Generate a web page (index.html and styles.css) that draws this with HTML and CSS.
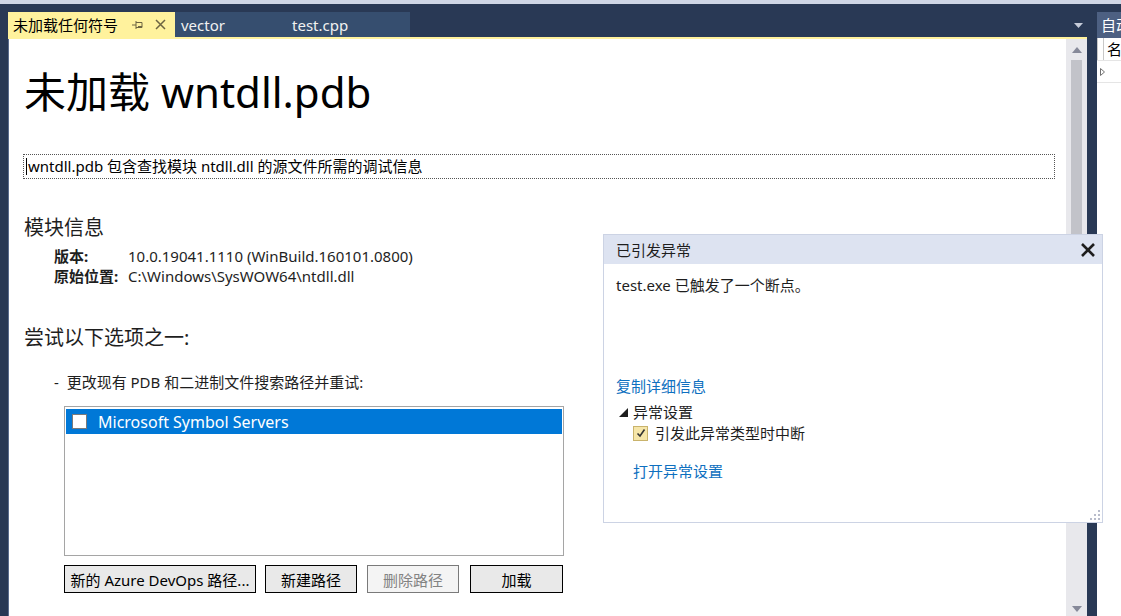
FILE: index.html
```html
<!DOCTYPE html>
<html lang="zh">
<head>
<meta charset="utf-8">
<link rel="stylesheet" href="styles.css">
</head>
<body>
<div class="topstrip"></div>
<div class="main">
  <div class="editor">
    <div class="tabrow">
      <div class="tab active">
        <span class="tabtitle">未加载任何符号</span>
        <svg class="pin" width="12" height="10" viewBox="0 0 12 10"><path d="M0 5H4M4 1V9M4 2.5H10V7.5H4M6 6.5H10" fill="none" stroke="#6d6542" stroke-width="1"/></svg>
        <svg class="tabx" width="11" height="11" viewBox="0 0 11 11"><path d="M1 1L10 10M10 1L1 10" stroke="#6d6542" stroke-width="1.5"/></svg>
      </div>
      <div class="tab inactive t-vector">vector</div>
      <div class="tab inactive t-test">test.cpp</div>
      <div class="tabspacer"></div>
      <svg class="dropdown" width="9" height="5" viewBox="0 0 9 5"><path d="M0 0H9L4.5 5Z" fill="#c6ccd9"/></svg>
    </div>
    <div class="yellowline"></div>
    <div class="docrow">
      <div class="doc">
        <h1 class="title">未加载 wntdll.pdb</h1>
        <div class="infobox"><span class="caret"></span>wntdll.pdb 包含查找模块 ntdll.dll 的源文件所需的调试信息</div>
        <h2 class="section s-module">模块信息</h2>
        <div class="kv">
          <div class="k">版本:</div><div class="v">10.0.19041.1110 (WinBuild.160101.0800)</div>
          <div class="k">原始位置:</div><div class="v">C:\Windows\SysWOW64\ntdll.dll</div>
        </div>
        <h2 class="section s-try">尝试以下选项之一:</h2>
        <div class="option">-&nbsp; 更改现有 PDB 和二进制文件搜索路径并重试:</div>
        <div class="listbox">
          <div class="listitem selected"><span class="cb"></span><span>Microsoft Symbol Servers</span></div>
        </div>
        <div class="buttons">
          <div class="btn b1">新的 Azure DevOps 路径...</div>
          <div class="btn b2">新建路径</div>
          <div class="btn b3 disabled">删除路径</div>
          <div class="btn b4">加载</div>
        </div>
      </div>
      <div class="vscroll">
        <svg class="arrow" width="10" height="6" viewBox="0 0 10 6"><path d="M0 6H10L5 0Z" fill="#868999"/></svg>
        <div class="thumb"></div>
        <div class="trackfill"></div>
        <svg class="arrow" width="10" height="6" viewBox="0 0 10 6"><path d="M0 0H10L5 6Z" fill="#868999"/></svg>
      </div>
    </div>
  </div>
  <div class="sidepanel">
    <div class="sidetab">自动</div>
    <div class="sidebody">
      <div class="sidehead"><span class="sh1"></span><span class="sh2">名称</span></div>
      <div class="siderow"><svg width="5" height="8" viewBox="0 0 5 8"><path d="M0.5 0.5L4.5 4L0.5 7.5Z" fill="none" stroke="#717171"/></svg></div>
    </div>
  </div>
</div>

<div class="popup">
  <div class="pophead">
    <span>已引发异常</span>
    <svg width="16" height="16" viewBox="0 0 16 16"><path d="M2 2L14 14M14 2L2 14" stroke="#1e1e1e" stroke-width="2.6"/></svg>
  </div>
  <div class="popbody">
    <div class="popmsg">test.exe 已触发了一个断点。</div>
    <div class="link copy">复制详细信息</div>
    <div class="exset"><svg width="9" height="9" viewBox="0 0 9 9"><path d="M9 0V9H0Z" fill="#1e1e1e"/></svg><span>异常设置</span></div>
    <div class="exchk"><span class="ycb"><svg width="12" height="12" viewBox="0 0 12 12"><path d="M2.5 6.5L5 9L9.5 2.5" fill="none" stroke="#333" stroke-width="1.6"/></svg></span><span>引发此异常类型时中断</span></div>
    <div class="link openset">打开异常设置</div>
  </div>
  <svg class="grip" width="11" height="11" viewBox="0 0 11 11"><g fill="#b8bccb"><rect x="9" y="1" width="2" height="2"/><rect x="9" y="5" width="2" height="2"/><rect x="9" y="9" width="2" height="2"/><rect x="5" y="5" width="2" height="2"/><rect x="5" y="9" width="2" height="2"/><rect x="1" y="9" width="2" height="2"/></g></svg>
</div>
</body>
</html>
```
FILE: styles.css
```css
* { box-sizing: border-box; }
html, body { margin: 0; padding: 0; }
body {
  width: 1121px;
  height: 616px;
  overflow: hidden;
  background: #293955;
  font-family: "Noto Sans", "Noto Sans CJK SC", sans-serif;
  font-size: 15px;
  color: #1e1e1e;
  position: relative;
}
.topstrip { height: 4px; background: #cfd6e5; }
.main { display: flex; height: 612px; }
.editor { width: 1097px; flex: none; padding-left: 8px; display: flex; flex-direction: column; }
.tabrow { height: 33px; display: flex; align-items: flex-end; }
.tab { height: 25px; display: flex; align-items: center; font-size: 15px; white-space: nowrap; }
.tab.active { width: 167px; background: #fff29d; color: #000; padding-left: 5px; }
.tabtitle { width: 119px; }
.tabx { margin-left: 11px; }
.tab.inactive { background: #364e6f; color: #f1f1f1; }
.t-vector { width: 110px; padding-left: 6px; }
.t-test { width: 125px; padding-left: 7px; }
.tabspacer { flex: 1; }
.dropdown { margin: 0 14px 9px 0; }
.yellowline { height: 2px; background: #fff29d; width: 1079px; }
.docrow { display: flex; flex: 1; }
.doc { width: 1058px; background: #fff; padding-left: 15px; border-left: 1px solid #5b6d8e; }
.vscroll { width: 21px; background: #e8e8ec; display: flex; flex-direction: column; align-items: center; padding: 8px 0 4px; }
.vscroll .arrow { flex: none; }
.thumb { width: 11px; height: 430px; background: #c2c3c9; margin-top: 7px; }
.trackfill { flex: 1; }
.title { margin: 27px 0 0; font-size: 42px; font-weight: normal; line-height: 52px; color: #000; }
.infobox { margin: 36px 0 0 -1px; width: 1032px; height: 25px; border: 1px dotted #555; font-size: 15px; line-height: 22px; padding-left: 2px; position: relative; color: #000; }
.caret { display: inline-block; width: 1px; height: 17px; background: #000; vertical-align: -3px; margin-right: 1px; }
.section { font-weight: normal; font-size: 20px; margin: 0; line-height: 28px; color: #1e1e1e; }
.s-module { margin-top: 35px; }
.kv { display: grid; grid-template-columns: 74px auto; margin: 4px 0 0 30px; line-height: 20px; font-size: 15px; color: #1e1e1e; }
.k { font-weight: bold; }
.s-try { margin-top: 38px; }
.option { margin: 20px 0 0 30px; font-size: 15px; line-height: 20px; }
.listbox { margin: 14px 0 0 40px; width: 500px; height: 150px; border: 1px solid #a5a5a5; padding: 2px 1px; }
.listitem { height: 25px; display: flex; align-items: center; font-size: 16px; }
.listitem.selected { background: #0078d7; color: #fff; }
.cb { width: 15px; height: 15px; background: #fff; border: 1px solid #7a7a7a; margin: 0 11px 0 6px; }
.buttons { display: flex; margin: 9px 0 0 40px; }
.btn { height: 28px; border: 1px solid #000; background: #e9e9e9; display: flex; align-items: center; justify-content: center; font-size: 15px; color: #000; white-space: nowrap; }
.b1 { width: 192px; }
.b2 { width: 92px; margin-left: 9px; }
.b3 { width: 92px; margin-left: 10px; }
.b4 { width: 93px; margin-left: 11px; }
.btn.disabled { border-color: #7a7a7a; background: #f4f4f4; color: #838383; }
.sidepanel { width: 24px; flex: none; display: flex; flex-direction: column; }
.sidetab { margin-top: 8px; height: 26px; width: 40px; background: #4d6082; color: #fff; font-size: 15px; line-height: 26px; padding-left: 4px; white-space: nowrap; }
.sidebody { flex: 1; background: #fff; width: 40px; }
.sidehead { height: 23px; display: flex; border-bottom: 1px solid #e5e5e5; }
.sh1 { width: 11px; border-right: 1px solid #c8c8c8; border-left: 1px solid #c8c8c8; }
.sh2 { padding-left: 3px; font-size: 15px; line-height: 22px; color: #000; white-space: nowrap; }
.siderow { height: 22px; display: flex; align-items: center; padding-left: 3px; border-bottom: 1px solid #e5e5e5; }
.popup { position: absolute; left: 603px; top: 234px; width: 500px; height: 289px; background: #fff; border: 1px solid #ccd3e4; }
.pophead { height: 29px; background: #dde3f1; display: flex; align-items: center; justify-content: space-between; padding: 0 6px 0 12px; font-size: 15px; color: #1e1e1e; }
.popbody { padding: 11px 0 0 12px; }
.popmsg { line-height: 20px; }
.link { color: #0e70c0; line-height: 20px; }
.copy { margin-top: 81px; }
.exset { display: flex; align-items: center; margin-top: 6px; line-height: 20px; }
.exset svg { margin: 0 5px 0 3px; }
.exchk { display: flex; align-items: center; margin: 1px 0 0 17px; line-height: 20px; }
.ycb { width: 15px; height: 15px; background: #f6e6a9; border: 1px solid #c9b36c; display: flex; align-items: center; justify-content: center; margin-right: 7px; }
.openset { margin: 18px 0 0 17px; }
.grip { position: absolute; right: 2px; bottom: 2px; }
```
